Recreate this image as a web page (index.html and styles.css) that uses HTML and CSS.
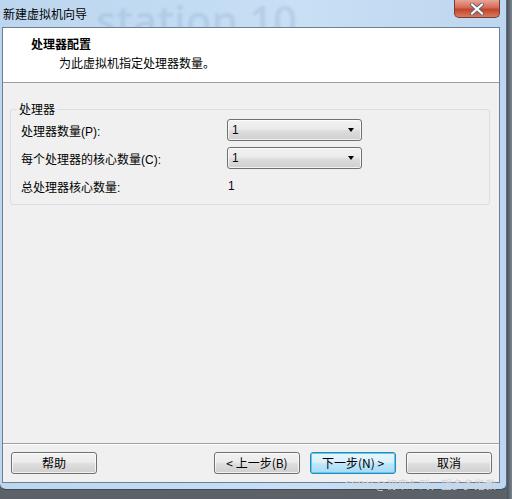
FILE: index.html
```html
<!DOCTYPE html>
<html>
<head>
<meta charset="utf-8">
<link rel="stylesheet" href="styles.css">
</head>
<body>
<div class="desk">
  <div class="window">
    <div class="titlebar">
      <span class="bgtext">station 10</span>
      <span class="title">新建虚拟机向导</span>
      <div class="close"><svg width="16" height="12" viewBox="0 0 16 12"><path d="M3 1.5 L13 10.5 M13 1.5 L3 10.5" stroke="#5a6478" stroke-width="4" stroke-linecap="round"/><path d="M3 1.5 L13 10.5 M13 1.5 L3 10.5" stroke="#ffffff" stroke-width="2.2" stroke-linecap="round"/></svg></div>
    </div>
    <div class="client">
      <div class="header">
        <div class="h-title">处理器配置</div>
        <div class="h-sub">为此虚拟机指定处理器数量。</div>
      </div>
      <div class="body">
        <div class="group">
          <div class="legend">处理器</div>
          <div class="row">
            <span class="label">处理器数量(P):</span>
            <div class="combo"><span>1</span><i class="arrow"></i></div>
          </div>
          <div class="row">
            <span class="label">每个处理器的核心数量(C):</span>
            <div class="combo"><span>1</span><i class="arrow"></i></div>
          </div>
          <div class="row row3">
            <span class="label">总处理器核心数量:</span>
            <span class="value">1</span>
          </div>
        </div>
      </div>
      <div class="footer">
        <div class="btn">帮助</div>
        <div class="spacer"></div>
        <div class="btn">&lt; 上一步(B)</div>
        <div class="btn default">下一步(N) &gt;</div>
        <div class="btn">取消</div>
      </div>
    </div>
    <span class="csdn">CSDN @初来乍到，望多多指教</span>
  </div>
  <div class="side"></div>
</div>
</body>
</html>
```
FILE: styles.css
```css
html, body {
  margin: 0;
  padding: 0;
}
body {
  width: 512px;
  height: 499px;
  overflow: hidden;
  background: linear-gradient(#8a8f96, #5c6168);
  font-family: "Liberation Sans", "Noto Sans CJK SC", sans-serif;
  font-size: 12px;
  color: #000;
}
.desk {
  display: flex;
  height: 499px;
}
.window {
  position: relative;
  width: 507px;
  height: 490px;
  box-sizing: border-box;
  display: flex;
  flex-direction: column;
  background: linear-gradient(90deg, #bcd6ef, #c8dff4 60%, #bdd7f0);
  border-right: 1px solid #5a6b80;
  border-bottom: 1px solid #3d4a5a;
  border-radius: 0 0 6px 6px;
  padding: 0 6px 6px 2px;
}
.titlebar {
  position: relative;
  height: 27px;
  flex: none;
  overflow: hidden;
}
.bgtext {
  position: absolute;
  left: 94px;
  top: -9px;
  font-family: "Open Sans", "Liberation Sans", sans-serif;
  font-size: 42px;
  font-weight: 600;
  color: rgba(90, 130, 175, 0.16);
  filter: blur(1.2px);
  white-space: nowrap;
}
.title {
  position: absolute;
  left: 1px;
  top: 5px;
  font-family: "Noto Sans CJK SC", sans-serif;
  font-size: 12px;
  color: #000;
}
.close {
  position: absolute;
  left: 452px;
  top: 0;
  width: 46px;
  height: 18px;
  box-sizing: border-box;
  border: 1px solid #7a3d33;
  border-top: none;
  border-radius: 0 0 5px 5px;
  background: linear-gradient(#e8a496, #d46a55 45%, #c3432b 55%, #d97a5e);
  display: flex;
  align-items: center;
  justify-content: center;
}
.client {
  flex: 1;
  display: flex;
  flex-direction: column;
  border: 1px solid #6f7f92;
  background: #f0f0f0;
}
.header {
  height: 55px;
  background: #fff;
  border-bottom: 1px solid #a0a0a0;
  box-sizing: border-box;
  padding: 7px 0 0 28px;
  font-family: "Noto Sans CJK SC", sans-serif;
}
.h-title {
  font-weight: bold;
  line-height: 17px;
}
.h-sub {
  margin-top: 2px;
  padding-left: 28px;
  line-height: 17px;
}
.body {
  flex: 1;
  padding: 26px 9px 0 7px;
}
.group {
  position: relative;
  border: 1px solid #d5dfe5;
  border-radius: 3px;
  height: 96px;
  box-sizing: border-box;
  padding: 9px 0 0 10px;
}
.legend {
  position: absolute;
  left: 6px;
  top: -8px;
  padding: 0 2px;
  background: #f0f0f0;
  line-height: 14px;
  font-family: "Noto Sans CJK SC", sans-serif;
}
.row {
  display: flex;
  align-items: center;
  height: 22px;
  margin-bottom: 6px;
}
.label {
  width: 206px;
  flex: none;
}
.combo {
  width: 135px;
  height: 22px;
  box-sizing: border-box;
  border: 1px solid #707070;
  border-radius: 3px;
  background: linear-gradient(#f2f2f2 0%, #ebebeb 45%, #dddddd 55%, #cfcfcf 100%);
  box-shadow: inset 0 0 0 1px rgba(255,255,255,0.7);
  display: flex;
  align-items: center;
  padding-left: 4px;
  position: relative;
}
.combo span {
  color: #1a0020;
}
.arrow {
  position: absolute;
  right: 7px;
  top: 8px;
  width: 0;
  height: 0;
  border-left: 3.5px solid transparent;
  border-right: 3.5px solid transparent;
  border-top: 4px solid #000;
}
.value {
  padding-left: 1px;
  color: #1a0020;
}
.footer {
  height: 39px;
  border-top: 1px solid #a0a0a0;
  box-shadow: inset 0 1px 0 #ffffff;
  display: flex;
  align-items: flex-start;
  padding: 8px 7px 0 8px;
  gap: 10px;
  box-sizing: border-box;
  font-family: "Noto Sans CJK SC", sans-serif;
}
.spacer {
  flex: 1;
}
.btn {
  width: 86px;
  height: 22px;
  box-sizing: border-box;
  border: 1px solid #707070;
  border-radius: 3px;
  background: linear-gradient(#f2f2f2 0%, #ebebeb 45%, #dddddd 55%, #cfcfcf 100%);
  box-shadow: inset 0 0 0 1px rgba(255,255,255,0.7);
  display: flex;
  align-items: center;
  justify-content: center;
  line-height: 14px;
}
.btn.default {
  border-color: #3c7fb1;
  box-shadow: inset 0 0 0 1px #48d4f7;
  background: linear-gradient(#eaf6fd 0%, #d9f0fc 45%, #bee6fd 55%, #a7d9f5 100%);
}
.csdn {
  position: absolute;
  right: 10px;
  bottom: -1px;
  font-family: "Noto Sans CJK SC", sans-serif;
  font-size: 11px;
  line-height: 11px;
  color: #d2d6dc;
  white-space: nowrap;
}
.side {
  flex: 1;
  background: linear-gradient(90deg, #4a525c, #7d848c);
}
```
